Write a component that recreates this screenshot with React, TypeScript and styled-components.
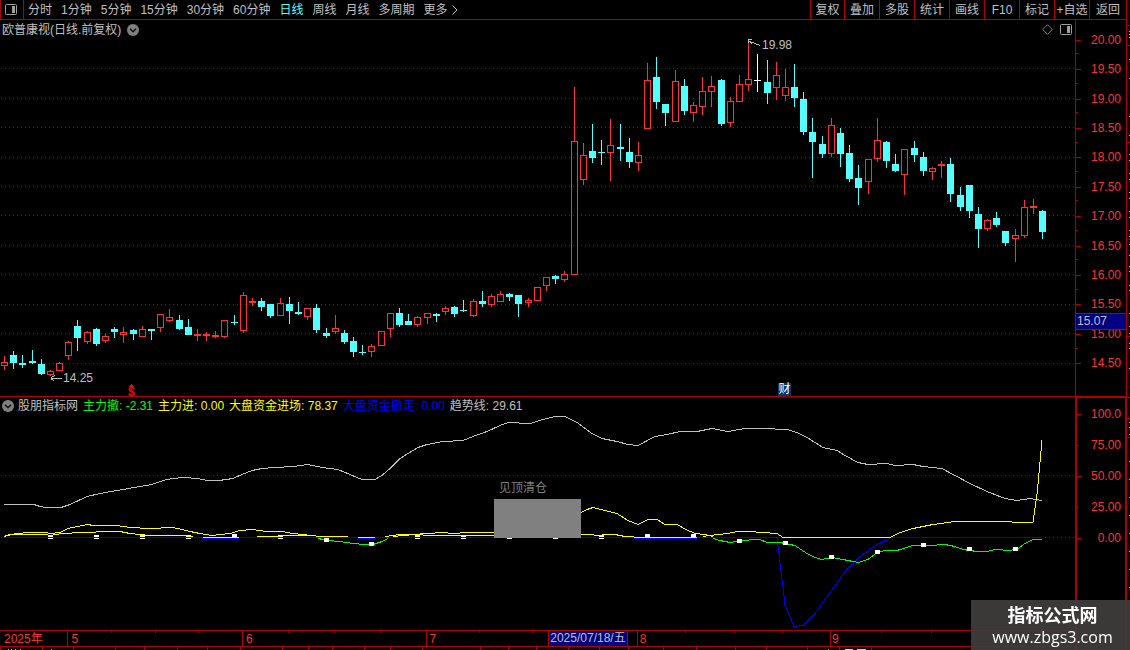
import React from 'react';
import styled, { createGlobalStyle } from 'styled-components';

const RED = '#b00000';
const HOT = '#ff3232';
const CYAN = '#54ffff';
const SILVER = '#c0c0c0';
const NAVY = '#000080';

const GlobalStyle = createGlobalStyle`
  * { box-sizing: border-box; }
  body {
    margin: 0;
    background: #000;
    color: ${SILVER};
    font-family: "Liberation Sans", "Noto Sans CJK SC", sans-serif;
    font-size: 12px;
    line-height: 16px;
  }
  button { font: inherit; color: inherit; background: none; border: 0; padding: 0; cursor: pointer; white-space: nowrap; }
`;

const Page = styled.div`
  display: flex;
  flex-direction: column;
  height: 100vh;
  overflow: hidden;
`;

const Toolbar = styled.header`
  display: flex;
  height: 20px;
  margin-right: 3px;
  border: solid ${RED};
  border-width: 0 1px 1px;
`;

const IconButton = styled.button`
  display: flex;
  align-items: center;
  justify-content: center;
`;

const LayoutButton = styled(IconButton)`
  width: 23px;
  padding-right: 2px;
  border-right: 1px solid ${RED};
`;

const PeriodTabs = styled.nav`
  display: flex;
  flex: 1;
  gap: 9px;
  padding-left: 4px;
`;

const Tab = styled.button<{ $active?: boolean }>`
  display: flex;
  align-items: center;
  gap: 4px;
  color: ${(p) => (p.$active ? CYAN : SILVER)};
`;

const Actions = styled.div`
  display: flex;
`;

const Action = styled.button`
  width: 35px;
  border-left: 1px solid ${RED};
  &:first-child { width: 34px; }
  &:last-child { width: 37px; }
`;

const Board = styled.main`
  flex: 1;
  min-height: 0;
  display: grid;
  grid-template-columns: minmax(0, 1fr) 52px 3px;
  grid-template-rows: minmax(0, 376fr) minmax(0, 234fr) 20px;
`;

const Panel = styled.section`
  position: relative;
  display: grid;
  grid-template: minmax(0, 1fr) / minmax(0, 1fr);
  min-height: 0;
  & > * { grid-area: 1 / 1; }
`;

const Canvas = styled.svg`
  display: block;
  width: 100%;
  height: 100%;
  shape-rendering: crispEdges;
`;

const PanelHead = styled.div`
  z-index: 1;
  align-self: start;
  display: flex;
  align-items: center;
  justify-content: space-between;
  height: 19px;
  padding: 0 3px 0 2px;
`;

const HeadGroup = styled.div<{ $gap: number }>`
  display: flex;
  align-items: center;
  gap: ${(p) => p.$gap}px;
  white-space: nowrap;
`;

const Readout = styled.span<{ $color: string }>`
  color: ${(p) => p.$color};
`;

const IndicatorName = styled.span`
  margin-left: -1px;
`;

const Note = styled.span<{ $x: number; $y: number; $color?: string }>`
  position: absolute;
  left: ${(p) => (p.$x / 1075) * 100}%;
  top: ${(p) => p.$y}%;
  color: ${(p) => p.$color ?? SILVER};
  white-space: nowrap;
`;

const NewsBadge = styled(Note)`
  width: 13px;
  height: 13px;
  background: #003a6c;
  line-height: 13px;
  text-align: center;
`;

const Dividend = styled(Note)`
  font-weight: bold;
  line-height: 12px;
`;

const PriceAxis = styled.aside`
  position: relative;
  grid-column: 2;
  grid-row: 1;
  display: grid;
  grid-auto-rows: minmax(0, 1fr);
  padding: 5px 1px 18px 0;
  border: solid ${RED};
  border-width: 0 1px;
`;

const ValueAxis = styled.aside`
  grid-column: 2;
  grid-row: 2 / 4;
  display: grid;
  grid-template-rows: repeat(5, 31px);
  border: 2px solid ${RED};
  border-bottom: 0;
`;

const Scale = styled.div<{ $minor: boolean; $short?: boolean }>`
  position: relative;
  display: flex;
  align-items: center;
  justify-content: flex-end;
  padding-right: 4px;
  color: ${HOT};
  &::before {
    content: '';
    position: absolute;
    left: 0;
    top: 50%;
    width: ${(p) => (p.$short ? 2 : 5)}px;
    height: 1px;
    background: ${RED};
  }
  &::after {
    content: '';
    position: absolute;
    left: 0;
    bottom: 0;
    width: 2px;
    height: 1px;
    background: ${(p) => (p.$minor ? RED : 'transparent')};
  }
`;

const CursorPrice = styled.div`
  position: absolute;
  left: 0;
  right: 0;
  top: 78%;
  height: 17px;
  padding-left: 1px;
  border: solid ${RED};
  border-width: 1px 0;
  background: ${NAVY};
  color: ${SILVER};
  line-height: 15px;
`;

const Edge = styled.div`
  grid-column: 3;
  grid-row: 1 / 4;
`;

const TimeAxis = styled(Panel)`
  grid-column: 1;
  grid-row: 3;
`;

const Months = styled.div`
  display: flex;
  padding-top: 1px;
  color: ${HOT};
`;

const Month = styled.span<{ $span: number }>`
  flex: ${(p) => p.$span} 1 0;
  min-width: 0;
  padding-left: 1px;
  &:first-child { padding-left: 4px; }
`;

const CursorDate = styled.span`
  position: absolute;
  left: 51%;
  top: 1px;
  height: 15px;
  padding: 0 1px;
  border: solid ${RED};
  border-width: 0 1px;
  background: ${NAVY};
  line-height: 15px;
  white-space: nowrap;
`;

const Watermark = styled.footer`
  position: fixed;
  right: 0;
  bottom: 0;
  z-index: 2;
  width: 159px;
  height: 50px;
  padding: 1px 0 0 4px;
  background: rgba(64, 60, 60, 0.93);
  color: #fff;
  text-align: center;
`;

const SiteName = styled.div`
  font-family: "Noto Sans CJK SC", sans-serif;
  font-size: 18px;
  font-weight: bold;
  line-height: 26px;
`;

const SiteLink = styled.a`
  display: block;
  color: #fff;
  font-family: "Open Sans", sans-serif;
  font-size: 16px;
  line-height: 20px;
  text-decoration: none;
`;

type Kind = 'r' | 'c' | 'w';
/* centre, high, body top, body bottom, low, kind */
type Candle = [number, number, number, number, number, Kind];

const candles: Candle[] = [
  [4, 356, 362, 366, 370, 'r'], [13, 351, 355, 363, 369, 'c'], [22, 355, 363, 365, 368, 'c'],
  [32, 350, 361, 363, 364, 'c'], [41, 359, 364, 374, 375, 'c'], [50, 370, 371, 375, 376, 'r'],
  [59, 362, 363, 371, 371, 'r'], [68, 341, 342, 356, 360, 'r'], [77, 320, 326, 338, 351, 'c'],
  [87, 331, 332, 342, 344, 'r'], [96, 328, 329, 344, 346, 'c'], [105, 334, 336, 341, 343, 'r'],
  [114, 327, 329, 332, 338, 'c'], [123, 327, 332, 335, 343, 'r'], [133, 329, 330, 334, 340, 'c'],
  [142, 326, 329, 337, 337, 'r'], [151, 329, 329, 331, 340, 'c'], [160, 314, 314, 328, 332, 'r'],
  [169, 309, 317, 321, 322, 'r'], [179, 315, 320, 329, 330, 'c'], [188, 319, 327, 335, 335, 'c'],
  [197, 329, 334, 336, 341, 'r'], [206, 332, 334, 336, 341, 'r'], [215, 331, 335, 337, 338, 'r'],
  [224, 320, 320, 337, 338, 'r'], [234, 315, 322, 323, 325, 'c'], [243, 292, 295, 331, 333, 'r'],
  [252, 298, 301, 303, 306, 'r'], [261, 298, 301, 307, 311, 'c'], [270, 304, 304, 316, 318, 'c'],
  [280, 298, 303, 316, 316, 'r'], [289, 297, 304, 311, 324, 'c'], [298, 302, 312, 314, 315, 'c'],
  [307, 308, 308, 317, 320, 'r'], [316, 304, 308, 330, 333, 'c'], [326, 328, 333, 336, 338, 'c'],
  [335, 315, 328, 332, 334, 'r'], [344, 330, 333, 342, 344, 'c'], [353, 337, 341, 352, 357, 'c'],
  [362, 345, 352, 353, 355, 'c'], [371, 344, 346, 352, 357, 'r'], [381, 331, 331, 346, 346, 'r'],
  [390, 313, 313, 329, 337, 'r'], [399, 308, 313, 325, 327, 'c'], [408, 314, 321, 325, 325, 'c'],
  [417, 316, 317, 325, 327, 'r'], [427, 313, 313, 318, 324, 'r'], [436, 313, 314, 316, 322, 'c'],
  [445, 306, 308, 312, 315, 'r'], [454, 306, 307, 314, 317, 'c'], [463, 300, 310, 311, 312, 'c'],
  [473, 299, 301, 316, 317, 'r'], [482, 291, 301, 304, 307, 'c'], [491, 294, 296, 305, 307, 'r'],
  [500, 291, 294, 302, 302, 'r'], [509, 293, 294, 297, 301, 'c'], [518, 295, 295, 304, 317, 'c'],
  [528, 298, 300, 303, 307, 'r'], [537, 287, 287, 301, 301, 'r'], [546, 277, 277, 286, 291, 'r'],
  [555, 275, 276, 279, 284, 'c'], [564, 271, 274, 280, 282, 'r'], [574, 87, 141, 275, 275, 'r'],
  [583, 143, 155, 180, 185, 'r'], [592, 124, 151, 158, 163, 'c'], [601, 140, 152, 153, 165, 'c'],
  [610, 119, 145, 153, 181, 'r'], [620, 124, 147, 149, 161, 'c'], [629, 138, 152, 162, 168, 'c'],
  [638, 142, 155, 163, 171, 'r'], [647, 63, 80, 129, 129, 'r'], [656, 57, 77, 102, 109, 'c'],
  [665, 104, 104, 113, 126, 'c'], [675, 70, 81, 122, 122, 'r'], [684, 79, 86, 111, 115, 'c'],
  [693, 102, 105, 113, 122, 'r'], [702, 77, 91, 107, 115, 'r'], [711, 76, 86, 92, 107, 'r'],
  [721, 79, 80, 124, 126, 'c'], [730, 97, 101, 123, 127, 'r'], [739, 75, 84, 102, 102, 'r'],
  [748, 43, 79, 85, 91, 'r'], [757, 54, 80, 81, 92, 'w'], [767, 60, 82, 93, 104, 'c'],
  [776, 62, 75, 88, 100, 'r'], [785, 69, 87, 96, 101, 'r'], [794, 64, 87, 98, 107, 'c'],
  [803, 92, 99, 132, 135, 'c'], [812, 118, 132, 142, 178, 'c'], [822, 136, 144, 154, 158, 'c'],
  [831, 118, 125, 154, 157, 'r'], [840, 128, 133, 154, 167, 'c'], [849, 145, 153, 179, 182, 'c'],
  [858, 165, 178, 188, 205, 'c'], [868, 159, 159, 182, 194, 'r'], [877, 118, 140, 159, 162, 'r'],
  [886, 141, 142, 161, 168, 'c'], [895, 154, 164, 171, 172, 'c'], [904, 149, 149, 175, 195, 'r'],
  [914, 141, 148, 155, 162, 'c'], [923, 152, 157, 171, 176, 'c'], [932, 167, 168, 172, 180, 'r'],
  [941, 161, 164, 166, 178, 'r'], [950, 158, 164, 194, 202, 'c'], [960, 187, 195, 207, 211, 'c'],
  [969, 185, 185, 211, 218, 'c'], [978, 207, 214, 229, 248, 'c'], [987, 219, 220, 229, 231, 'r'],
  [996, 212, 218, 225, 227, 'c'], [1005, 231, 231, 243, 246, 'c'], [1015, 229, 235, 239, 262, 'r'],
  [1024, 200, 207, 236, 238, 'r'], [1033, 199, 206, 208, 214, 'r'], [1042, 210, 211, 232, 239, 'c'],
];

const kindColor: Record<Kind, string> = { r: HOT, c: CYAN, w: '#fff' };

function CandleMark({ candle }: { candle: Candle }) {
  const [x, high, top, bottom, low, kind] = candle;
  const color = kindColor[kind];
  const hollow = kind === 'r' && bottom - top > 2;
  if (!hollow) {
    return (
      <g fill={color}>
        <rect x={x} y={high} width={1} height={low - high} />
        <rect x={x - 3} y={top} width={7} height={bottom - top} />
      </g>
    );
  }
  return (
    <g fill={color}>
      <rect x={x} y={high} width={1} height={top - high} />
      <rect x={x} y={bottom} width={1} height={low - bottom} />
      <rect x={x - 2.5} y={top + 0.5} width={6} height={bottom - top - 1} fill="none" stroke={color} />
    </g>
  );
}

const priceGrid = [68, 98, 127, 157, 186, 215, 245, 274, 304, 333, 363];
const prices = ['20.00', '19.50', '19.00', '18.50', '18.00', '17.50', '17.00', '16.50', '16.00', '15.50', '15.00', '14.50'];
const levels = ['100.0', '75.00', '50.00', '25.00', '0.00'];

function GridLine({ y }: { y: number }) {
  return <line x1={1} x2={1075} y1={y + 0.5} y2={y + 0.5} stroke="#b00000" strokeDasharray="1 3" />;
}

const trend =
  '4,504 34,504 40,506 46,507 61,507 70,504 87,496 100,493 117,490 140,486 152,484 163,480 172,478 185,477 197,478 208,480 219,480 233,478 242,474 252,470 262,468 275,467 293,466 308,464 322,467 338,469 350,474 362,479 375,479 382,475 390,468 400,458 408,453 418,447 427,444 443,441 463,440 473,436 487,431 500,425 508,422 530,423 543,419 555,416 565,416 577,422 592,433 602,438 617,441 628,444 638,445 655,436 667,434 680,431 697,431 712,428 728,431 745,428 763,428 787,429 797,432 807,437 823,447 837,450 845,455 858,462 868,464 887,463 895,465 913,464 923,466 942,468 955,475 970,483 987,491 1005,498 1017,500 1030,498 1042,500';

const yellowLines = [
  '4,536 10,534 27,532 46,532 50,533 60,532 68,528 77,526 88,524 93,525 117,525 130,527 150,528 173,527 182,529 190,531 200,533 212,535 230,533 240,530 252,529 267,531 282,531 293,533 312,535 320,536 348,536',
  '4,536 12,534 46,534 50,535 62,533 82,532 110,531 120,531 130,533 150,535 183,535 193,536',
  '203,537 239,537',
  '257,536 275,536 285,535 312,535 320,536 348,536',
  '358,537 375,537',
  '385,536 400,534 413,534 443,532 453,533 468,532 495,532',
  '393,536 415,534 430,535 495,535',
  '581,512 587,509 593,507 605,510 617,513 628,520 638,524 648,519 657,519 665,524 677,524 686,529 695,533 705,534 713,536',
  '581,534 590,534 597,535 607,534 615,534 625,536 634,536',
  '634,537 697,537',
  '703,536 710,535 727,533 738,531 750,531 762,532 777,533 783,537 890,537 900,532 913,528 933,524 955,521 1010,521 1014,522 1033,522 1037,494 1042,440',
];

const blueCurve = '777,537 785,604 794,626 803,625 815,613 830,592 847,569 860,556 877,544 890,538';

const greenLines = [
  '318,538 328,540 340,541 353,543 365,544 373,544 382,541 388,538',
  '713,538 720,540 730,542 737,541 753,539 760,539 767,542 780,542 795,545 807,553 815,557 822,559 832,557 843,559 858,562 868,559 877,552 885,550 897,550 913,545 930,545 945,544 955,546 963,549 977,551 987,551 995,549 1010,550 1018,548 1025,543 1033,539 1042,539',
];

const dots: [number, number][] = [
  [50, 537], [96, 537], [142, 537], [188, 537], [234, 536], [280, 537], [326, 540], [371, 544],
  [417, 537], [463, 537], [509, 537], [555, 537], [601, 537], [647, 536], [693, 536], [739, 541],
  [785, 543], [831, 557], [877, 552], [923, 545], [969, 549], [1015, 549],
];

function Curve({ points, color }: { points: string; color: string }) {
  return <polyline points={points} transform="translate(0 .5)" fill="none" stroke={color} />;
}

const months: [string, number][] = [['2025年', 67], ['5', 175], ['6', 184], ['7', 211], ['8', 193], ['9', 245]];
const monthLines = [67, 242, 426, 637, 830];
const weekTicks = [111, 155, 198, 288, 334, 380, 479, 532, 685, 734, 782, 881, 931];
const lowerTicks = [0, 42, 73, 115, 144, 177, 207, 240, 282, 308, 332, 364, 390, 422, 480, 508, 536, 568, 599, 628, 663, 696, 735, 766, 807, 839, 871];

const edgeMarks = [31, 34, 37, 59, 78, 116, 135, 154, 160, 173, 179, 192, 198, 211, 217, 230, 236, 244, 255, 266, 271, 285, 290, 313, 326, 333, 343, 348, 368, 422, 427, 434, 461, 479, 497, 515, 533, 551, 569, 587];
const edgeTicks = [25, 45, 142, 239, 336, 397, 418, 437];

function PanelIcon() {
  return (
    <svg width="12" height="11" viewBox="0 0 12 11" aria-hidden="true">
      <rect x=".5" y=".5" width="11" height="10" rx="1" fill="none" stroke="#a0a0a0" />
      <rect x="7" y="2" width="3" height="7" fill="#a0a0a0" />
    </svg>
  );
}

function ChevronDisc() {
  return (
    <svg width="12" height="12" viewBox="0 0 12 12" aria-hidden="true">
      <circle cx="6" cy="6" r="6" fill="#808080" />
      <path d="M3 4.7 6 7.7 9 4.7" fill="none" stroke="#111" strokeWidth="1.5" />
    </svg>
  );
}

const periods = ['分时', '1分钟', '5分钟', '15分钟', '30分钟', '60分钟', '日线', '周线', '月线', '多周期', '更多'];
const actions = ['复权', '叠加', '多股', '统计', '画线', 'F10', '标记', '+自选', '返回'];

const readouts: [string, string][] = [
  ['主力撤: -2.31', '#00ff00'],
  ['主力进: 0.00', '#ffff00'],
  ['大盘资金进场: 78.37', '#ffff00'],
  ['大盘资金撤走: 0.00', '#0000ff'],
  ['趋势线: 29.61', SILVER],
];

export default function App() {
  return (
    <Page>
      <GlobalStyle />
      <Toolbar>
        <LayoutButton aria-label="布局"><PanelIcon /></LayoutButton>
        <PeriodTabs>
          {periods.map((name) => (
            <Tab key={name} $active={name === '日线'}>
              {name}
              {name === '更多' && (
                <svg width="6" height="10" viewBox="0 0 6 10" aria-hidden="true">
                  <path d="M.5.5 5 5 .5 9.5" fill="none" stroke={SILVER} />
                </svg>
              )}
            </Tab>
          ))}
        </PeriodTabs>
        <Actions>
          {actions.map((name) => <Action key={name}>{name}</Action>)}
        </Actions>
      </Toolbar>

      <Board>
        <Panel>
          <Canvas viewBox="0 20 1075 376" preserveAspectRatio="none">
            {priceGrid.map((y) => <GridLine key={y} y={y} />)}
            {candles.map((c) => <CandleMark key={c[0]} candle={c} />)}
            <path d="M51.5 378.5H62M55 375.5 51.5 377.5V379L54 381" fill="none" stroke={SILVER} />
            <path d="M748.5 43V39.5H752M748.5 41 760 45.5M749 41l3 3" fill="none" stroke={SILVER} />
            <path d="M128 387h7l-3.500-3z" fill="#f00" />
          </Canvas>
          <PanelHead>
            <HeadGroup $gap={6}>
              <span>欧普康视(日线.前复权)</span>
              <IconButton aria-label="展开"><ChevronDisc /></IconButton>
            </HeadGroup>
            <HeadGroup $gap={7}>
              <IconButton aria-label="标记点">
                <svg width="11" height="11" viewBox="0 0 11 11" aria-hidden="true">
                  <path d="M5.500.7 10.300 5.500 5.500 10.300.7 5.500z" fill="none" stroke="#808080" />
                </svg>
              </IconButton>
              <IconButton aria-label="侧栏"><PanelIcon /></IconButton>
            </HeadGroup>
          </PanelHead>
          <Note $x={63} $y={93}>14.25</Note>
          <Note $x={762} $y={4.600}>19.98</Note>
          <Dividend $x={128} $y={97.300} $color="#f00">$</Dividend>
          <NewsBadge $x={778} $y={96.500} $color="#fff">财</NewsBadge>
        </Panel>

        <PriceAxis>
          {prices.map((v, i) => <Scale key={v} $minor={i < prices.length - 1}>{v}</Scale>)}
          <CursorPrice>15.07</CursorPrice>
        </PriceAxis>

        <Panel>
          <Canvas viewBox="0 396 1075 234" preserveAspectRatio="none">
            <rect x={0} y={396} width={1075} height={1} fill={RED} />
            <GridLine y={475} />
            <GridLine y={537} />
            <rect x={4} y={537} width={1038} height={1} fill="#00f" />
            {[[202, 37], [358, 18], [634, 64]].map(([x, w]) => (
              <rect key={x} x={x} y={538} width={w} height={1} fill="#00f" />
            ))}
            <Curve points={trend} color={SILVER} />
            <Curve points={blueCurve} color="#0000ff" />
            {greenLines.map((p) => <Curve key={p} points={p} color="#00ff00" />)}
            {dots.map(([x, y]) => <rect key={x} x={x - 2} y={y - 2} width={5} height={4} fill="#fff" />)}
            <rect x={4} y={537} width={770} height={1} fill="#00f" />
            {yellowLines.map((p) => <Curve key={p} points={p} color="#ffff00" />)}
            <rect x={494} y={499} width={87} height={39} fill="#808080" />
            {dots.filter(([, y]) => y === 537).map(([x]) => (
              <rect key={x} x={x - 2} y={538} width={5} height={1} fill="#fff" />
            ))}
          </Canvas>
          <PanelHead>
            <HeadGroup $gap={5}>
              <IconButton aria-label="指标菜单"><ChevronDisc /></IconButton>
              <IndicatorName>股朋指标网</IndicatorName>
              {readouts.map(([text, color]) => <Readout key={text} $color={color}>{text}</Readout>)}
            </HeadGroup>
          </PanelHead>
          <Note $x={499} $y={36} $color="#808080">见顶清仓</Note>
        </Panel>

        <ValueAxis>
          {levels.map((v, i) => <Scale key={v} $minor={false} $short={i % 2 === 1}>{v}</Scale>)}
        </ValueAxis>

        <TimeAxis>
          <Canvas viewBox="0 630 1075 20" preserveAspectRatio="none" fill={RED}>
            <rect x={0} y={630} width={1075} height={1} />
            <rect x={0} y={646} width={1075} height={1} />
            {monthLines.map((x) => <rect key={x} x={x} y={630} width={1} height={16} />)}
            {weekTicks.map((x) => <rect key={x} x={x} y={631} width={1} height={2} />)}
            {lowerTicks.map((x) => <rect key={x} x={x} y={647} width={1} height={3} />)}
            {[8, 11, 15, 20, 51, 828].map((x) => <rect key={x} x={x} y={649} width={1} height={1} fill={SILVER} />)}
            <rect x={845} y={649} width={8} height={1} fill={CYAN} />
            <rect x={857} y={649} width={9} height={1} fill={CYAN} />
          </Canvas>
          <Months>
            {months.map(([name, span]) => <Month key={name} $span={span}>{name}</Month>)}
          </Months>
          <CursorDate>2025/07/18/五</CursorDate>
        </TimeAxis>

        <Edge>
          <Canvas viewBox="0 20 3 630" preserveAspectRatio="none">
            {edgeTicks.map((y) => <rect key={y} x={0} y={y} width={3} height={1} fill={RED} />)}
            {edgeMarks.map((y) => <rect key={y} x={2} y={y} width={1} height={1} fill={SILVER} />)}
          </Canvas>
        </Edge>
      </Board>

      <Watermark>
        <SiteName>指标公式网</SiteName>
        <SiteLink href="#">www.zbgs3.com</SiteLink>
      </Watermark>
    </Page>
  );
}
